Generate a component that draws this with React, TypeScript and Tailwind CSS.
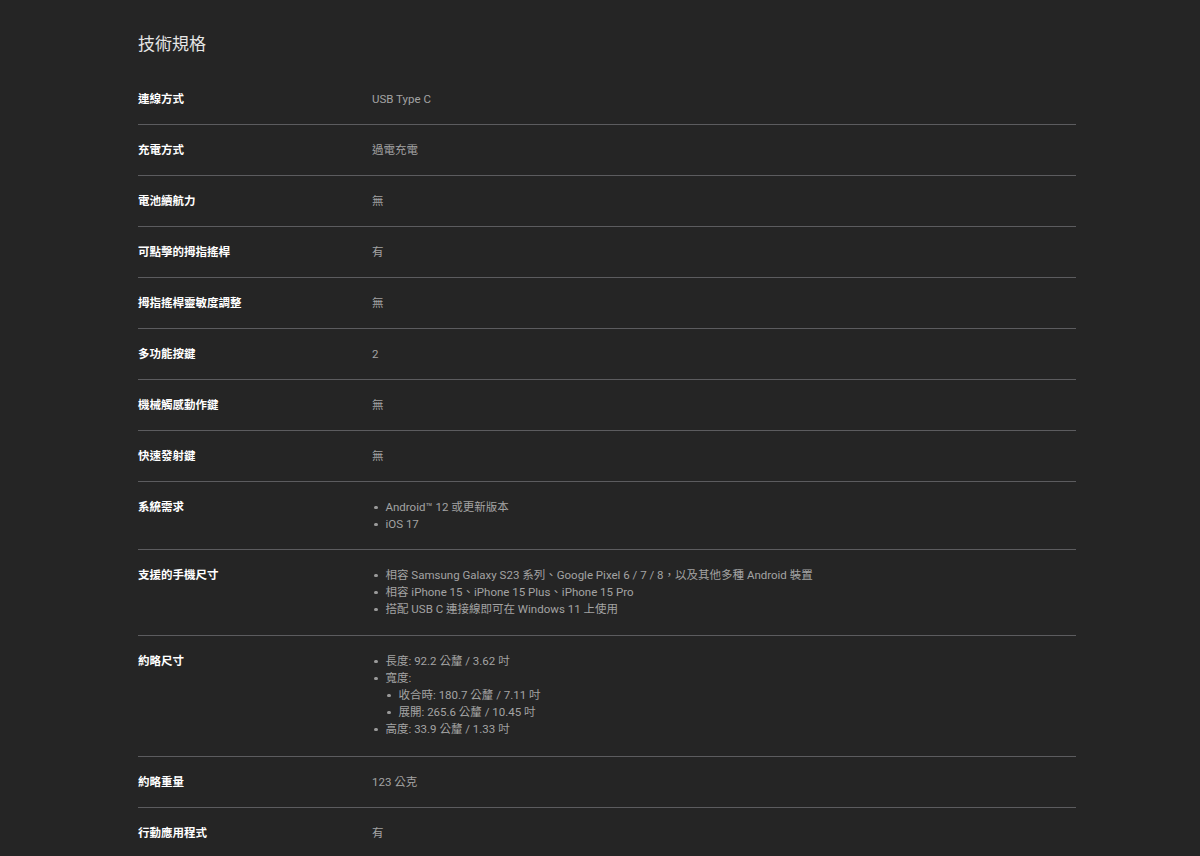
import React from "react"

type Item = { text: string; children?: string[] }
type Row = { label: string; value?: string; list?: Item[]; extra?: string }

const rows: Row[] = [
    { label: "連線方式", value: "USB Type C" },
    { label: "充電方式", value: "過電充電" },
    { label: "電池續航力", value: "無" },
    { label: "可點擊的拇指搖桿", value: "有" },
    { label: "拇指搖桿靈敏度調整", value: "無" },
    { label: "多功能按鍵", value: "2" },
    { label: "機械觸感動作鍵", value: "無" },
    { label: "快速發射鍵", value: "無" },
    {
        label: "系統需求",
        list: [{ text: "Android™ 12 或更新版本" }, { text: "iOS 17" }],
        extra: "",
    },
    {
        label: "支援的手機尺寸",
        list: [
            { text: "相容 Samsung Galaxy S23 系列、Google Pixel 6 / 7 / 8，以及其他多種 Android 裝置" },
            { text: "相容 iPhone 15、iPhone 15 Plus、iPhone 15 Pro" },
            { text: "搭配 USB C 連接線即可在 Windows 11 上使用" },
        ],
        extra: "mb-[1px]",
    },
    {
        label: "約略尺寸",
        list: [
            { text: "長度: 92.2 公釐 / 3.62 吋" },
            { text: "寬度:", children: ["收合時: 180.7 公釐 / 7.11 吋", "展開: 265.6 公釐 / 10.45 吋"] },
            { text: "高度: 33.9 公釐 / 1.33 吋" },
        ],
        extra: "mb-[2px]",
    },
    { label: "約略重量", value: "123 公克" },
    { label: "行動應用程式", value: "有" },
]

function Bullet({ text }: { text: string }) {
    return (
        <div className="flex items-center h-[17px]">
            <span className="w-[3.5px] h-[3.5px] rounded-full bg-[#9a9a9a] ml-[2px] mr-[8px] shrink-0"></span>
            <span>{text}</span>
        </div>
    )
}

export default function App() {
    return (
        <div
            className="min-h-[856px] bg-[#252525] pl-[138px] pr-[124px] pt-[32px]"
            style={{ fontFamily: 'Roboto, "Noto Sans CJK TC", sans-serif' }}
        >
            <h1 className="text-[17px] leading-[24px] text-[#e6e6e6] mb-[18px]">技術規格</h1>
            <div>
                {rows.map((row, i) => (
                    <div
                        key={row.label}
                        className={`flex pt-[17px] pb-[16px] text-[11.5px] leading-[17px] ${i < rows.length - 1 ? "border-b border-[#5c5c5f]" : ""}`}
                    >
                        <div className="w-[234px] shrink-0 font-bold text-white">{row.label}</div>
                        <div className="text-[#a3a3a3]">
                            {row.value}
                            {row.list && (
                                <div className={row.extra}>
                                    {row.list.map(item => (
                                        <div key={item.text}>
                                            <Bullet text={item.text} />
                                            {item.children && (
                                                <div className="pl-[13px]">
                                                    {item.children.map(c => (
                                                        <Bullet key={c} text={c} />
                                                    ))}
                                                </div>
                                            )}
                                        </div>
                                    ))}
                                </div>
                            )}
                        </div>
                    </div>
                ))}
            </div>
        </div>
    )
}
